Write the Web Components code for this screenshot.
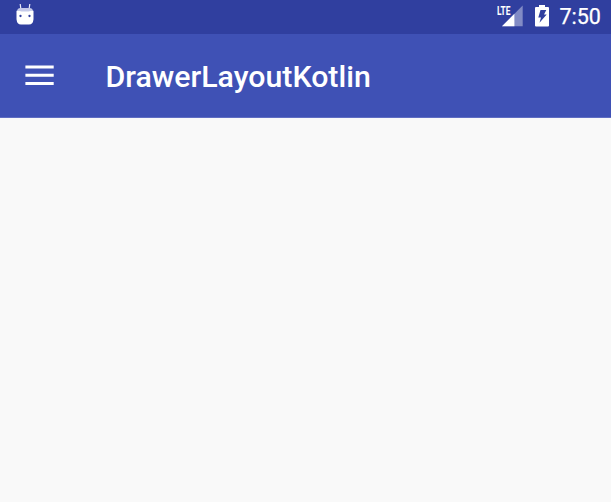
<!DOCTYPE html>
<html lang="en"><head><meta charset="utf-8"><title>DrawerLayoutKotlin</title>
<style>html,body{margin:0;height:100%;overflow:hidden;background:#f9f9f9}</style></head><body>
<app-screen><status-bar slot="status">7:50</status-bar><tool-bar slot="toolbar">DrawerLayoutKotlin</tool-bar></app-screen>
<script>
const define=(name,html)=>customElements.define(name,class extends HTMLElement{
 constructor(){super();this.attachShadow({mode:'open'}).innerHTML=html;}
});
define('robot-icon',`<style>:host{display:block;width:18px;height:21px}svg{display:block}</style>
<svg width="18" height="21" viewBox="0 0 18 21"><path d="M4.200 0l.6 4.500M13.800 0l-.6 4.500" stroke="#e8eaf6" stroke-width="1.200"/><path d="M1 8V6.500Q1.500 4 4 4h10q2.500 0 3 2.500V8z" fill="#c5cae9"/><path d="M.500 6.800q2 .2 3 .2l2 .6h7l2-.6 3-.2v8.400Q17 20.500 13 20.500H5Q1 20.500.500 15.200z" fill="#fff"/><circle cx="4.500" cy="12" r="1.150" fill="#303f9f"/><circle cx="13.500" cy="12" r="1.150" fill="#303f9f"/></svg>`);
define('signal-icon',`<style>:host{display:block;width:27px;height:24px}svg{display:block}text{font:700 13px Roboto,sans-serif}</style>
<svg width="27" height="24" viewBox="0 0 27 24"><path d="M25.700 1.500v20.800H5z" fill="#fff" opacity=".4"/><path d="M17.400 9.800v12.500H5z" fill="#fff"/><text x="0" y="10.600" fill="#fff" textLength="13.500" lengthAdjust="spacingAndGlyphs">LTE</text></svg>`);
define('battery-icon',`<style>:host{display:block;width:14px;height:22px}svg{display:block}</style>
<svg width="14" height="22" viewBox="0 0 14 22"><path d="M4 0h6v2h3q1 0 1 1v17.500q0 1-1 1H1q-1 0-1-1V3q0-1 1-1h3z" fill="#fff"/><path d="M5.500 5h5.800L9 9.500h2.700L4.500 17.700 6 12.500H3.300z" fill="#303f9f"/></svg>`);
define('status-bar',`<style>:host{display:flex;align-items:flex-start;box-sizing:border-box;height:34px;padding:4px 10px 0 16px;background:#303f9f;color:#fff;font:21.500px/26px Roboto,sans-serif;-webkit-text-stroke:.25px #fff}.space{flex:1}battery-icon,signal-icon,robot-icon{-webkit-text-stroke:0}battery-icon{margin:1px 0 0 11px}.clock{width:41.500px;margin-left:10.500px;white-space:nowrap}</style>
<robot-icon></robot-icon><span class="space"></span><signal-icon></signal-icon><battery-icon></battery-icon><span class="clock"><slot></slot></span>`);
define('menu-icon',`<style>:host{display:block;width:29px;height:21px}svg{display:block}</style><svg width="29" height="21"><path d="M.400 2h28.300M.400 10.300h28.300M.400 18.500h28.300" stroke="#fff" stroke-width="3"/></svg>`);
define('tool-bar',`<style>:host{display:flex;align-items:center;box-sizing:border-box;height:84px;padding:0 25px;background:#3f51b5;border-bottom:1px solid #5f6dc2;color:#fff;font:500 30.300px/40px Roboto,sans-serif}.title{margin:3px 0 0 51.500px}</style><menu-icon></menu-icon><span class="title"><slot></slot></span>`);
define('app-screen',`<style>:host{display:grid;grid-template-rows:34px 84px 1fr;height:100%;background:#f9f9f9}</style><slot name="status"></slot><slot name="toolbar"></slot><main><slot></slot></main>`);
</script></body></html>
